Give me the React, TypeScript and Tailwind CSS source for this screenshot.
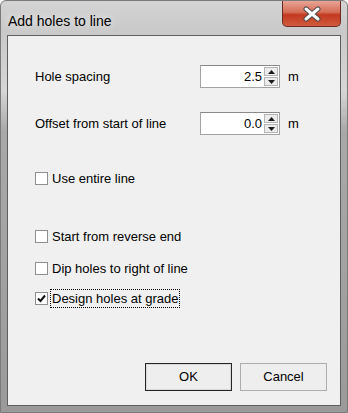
import React from 'react';

const font = { fontFamily: '"Liberation Sans", Arial, sans-serif' };

const Spin: React.FC<{ value: string }> = ({ value }) => (
  <div className="flex items-center">
    <div className="flex h-[23px] w-[80px] border border-[#a3a3a3] border-t-[#8a8a8a] bg-white">
      <div className="flex flex-1 items-center justify-end pr-[2px] text-[13px] text-black">{value}</div>
      <div className="flex w-[15px] flex-col gap-[1px] py-[1px] pr-[1px]">
        <div className="flex flex-1 items-center justify-center border border-[#b5b5b5] bg-[#ececec]">
          <svg width="7" height="4" viewBox="0 0 7 4"><path d="M3.5 0 L7 4 L0 4 Z" fill="#1a1a1a" /></svg>
        </div>
        <div className="flex flex-1 items-center justify-center border border-[#b5b5b5] bg-[#ececec]">
          <svg width="7" height="4" viewBox="0 0 7 4"><path d="M0 0 L7 0 L3.5 4 Z" fill="#1a1a1a" /></svg>
        </div>
      </div>
    </div>
    <span className="ml-[8px] text-[13px] text-black">m</span>
  </div>
);

const Check: React.FC<{ label: string; checked?: boolean; focused?: boolean }> = ({ label, checked, focused }) => (
  <div className="flex h-[16px] items-center">
    <div className="flex h-[13px] w-[13px] items-center justify-center border border-[#8e8f8f] bg-white">
      {checked && (
        <svg width="9" height="9" viewBox="0 0 9 9">
          <path d="M1 4.5 L3.5 7 L8 1.5" fill="none" stroke="#111" strokeWidth="2" />
        </svg>
      )}
    </div>
    <span
      className={`ml-[2px] px-[1px] text-[13px] leading-[17px] text-black ${
        focused ? 'border border-dotted border-black' : 'border border-transparent'
      }`}
    >
      {label}
    </span>
  </div>
);

export default function App() {
  return (
    <div
      className="flex h-[413px] w-[348px] flex-col overflow-hidden rounded-t-[6px] border border-[#7a7a7a] bg-[linear-gradient(to_bottom,#d4d4d4_0px,#c9c9c9_30px,#d6d6d6_90px,#a9a9a9_130px,#9a9a9a_413px)]"
      style={font}
    >
      <div className="flex h-[34px] shrink-0 items-start justify-between">
        <div className="ml-[7px] mt-[12px] text-[14px] leading-[16px] text-black [text-shadow:0_0_8px_#ffffff]">
          Add holes to line
        </div>
        <div className="mr-[6px] flex h-[26px] w-[59px] items-center justify-center rounded-b-[5px] border border-t-0 border-[#6d2a20] bg-[linear-gradient(to_bottom,#e8a494_0%,#d56d57_45%,#c2391f_55%,#d05a3e_100%)]">
          <svg width="22" height="16" viewBox="0 0 22 16">
            <path d="M5 3 L17 13 M17 3 L5 13" stroke="#4a4a4a" strokeWidth="5" strokeLinecap="round" />
            <path d="M5 3 L17 13 M17 3 L5 13" stroke="#ffffff" strokeWidth="3" strokeLinecap="round" />
          </svg>
        </div>
      </div>
      <div className="mx-[6px] mb-[6px] flex flex-1 flex-col border border-[#5f5f5f] bg-[#f0f0f0] pl-[27px] pr-[13px]">
        <div className="mt-[29px] flex items-center">
          <span className="w-[165px] text-[13px] text-black">Hole spacing</span>
          <Spin value="2.5" />
        </div>
        <div className="mt-[24px] flex items-center">
          <span className="w-[165px] text-[13px] text-black">Offset from start of line</span>
          <Spin value="0.0" />
        </div>
        <div className="mt-[35px]">
          <Check label="Use entire line" />
        </div>
        <div className="mt-[42px]">
          <Check label="Start from reverse end" />
        </div>
        <div className="mt-[16px]">
          <Check label="Dip holes to right of line" />
        </div>
        <div className="mt-[14px]">
          <Check label="Design holes at grade" checked focused />
        </div>
        <div className="mt-auto mb-[14px] flex justify-end gap-[8px]">
          <button className="h-[28px] w-[87px] border border-[#262626] bg-[#eeeeee] text-[13px] text-black shadow-[inset_0_0_0_1px_#d8d8d8]">
            OK
          </button>
          <button className="h-[28px] w-[87px] border border-[#adadad] bg-[#eeeeee] text-[13px] text-black">
            Cancel
          </button>
        </div>
      </div>
    </div>
  );
}
